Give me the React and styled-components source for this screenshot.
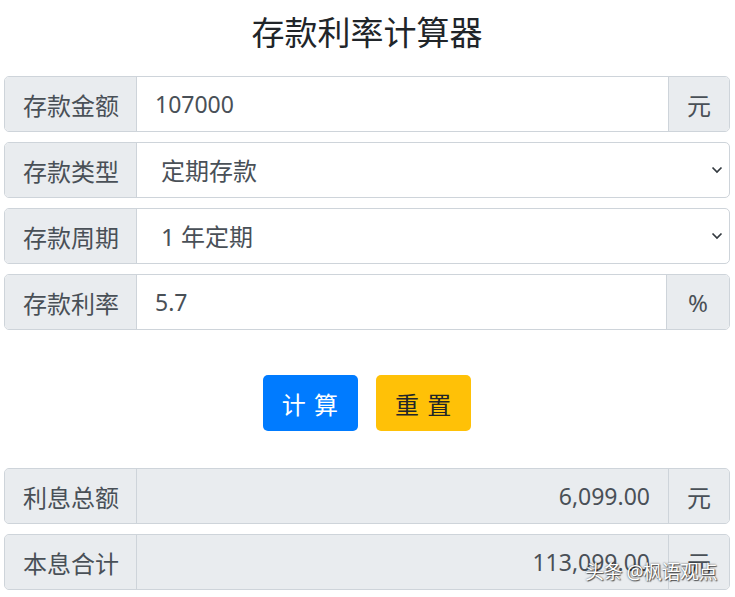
import { useState } from 'react';
import styled, { createGlobalStyle } from 'styled-components';

const GlobalStyle = createGlobalStyle`
  body {
    margin: 0;
    background: #fff;
    font-family: "Noto Sans", "Noto Sans CJK SC", sans-serif;
    color: #495057;
  }
`;

const Page = styled.div`
  position: relative;
  width: 735px;
  height: 597px;
  overflow: hidden;
  padding: 0 5px 0 4px;
  box-sizing: border-box;
`;

const Title = styled.h1`
  margin: 13px 0 0;
  height: 63px;
  text-align: center;
  font-size: 33px;
  font-weight: 400;
  line-height: 40px;
  color: #212529;
`;

const Form = styled.div`
  display: flex;
  flex-direction: column;
  gap: 10px;
`;

const Group = styled.div`
  display: flex;
  height: 56px;
  border: 1px solid #ced4da;
  border-radius: 5px;
  overflow: hidden;
  box-sizing: border-box;
  background: ${(p) => (p.$readonly ? '#e9ecef' : '#fff')};
`;

const Label = styled.div`
  flex: 0 0 auto;
  width: 132px;
  display: flex;
  align-items: center;
  padding-left: 18px;
  box-sizing: border-box;
  background: #e9ecef;
  border-right: 1px solid #ced4da;
  font-size: 24px;
  color: #495057;
`;

const Addon = styled.div`
  flex: 0 0 auto;
  width: ${(p) => p.$w || 60}px;
  display: flex;
  align-items: center;
  justify-content: center;
  background: #e9ecef;
  border-left: 1px solid #ced4da;
  font-size: 24px;
  color: #495057;
`;

const Input = styled.input`
  flex: 1;
  min-width: 0;
  border: none;
  outline: none;
  background: transparent;
  padding: 0 18px;
  font-family: inherit;
  font-size: 23px;
  color: #495057;
  text-align: ${(p) => (p.$right ? 'right' : 'left')};
`;

const SelectWrap = styled.div`
  position: relative;
  flex: 1;
  display: flex;
`;

const Select = styled.select`
  flex: 1;
  appearance: none;
  border: none;
  outline: none;
  background: transparent;
  padding: 0 40px 0 24px;
  font-family: inherit;
  font-size: 24px;
  color: #495057;
`;

const Chevron = styled.svg`
  position: absolute;
  right: 5px;
  top: 50%;
  margin-top: -6px;
  pointer-events: none;
`;

const Buttons = styled.div`
  display: flex;
  justify-content: center;
  gap: 18px;
  margin: 45px 0 37px;
`;

const Button = styled.button`
  height: 56px;
  padding: 0 19px;
  border: none;
  border-radius: 5px;
  font-family: inherit;
  font-size: 24px;
  letter-spacing: 1px;
  background: ${(p) => (p.$variant === 'warning' ? '#ffc107' : '#007bff')};
  color: ${(p) => (p.$variant === 'warning' ? '#212529' : '#fff')};
  cursor: pointer;
`;

const Watermark = styled.div`
  position: absolute;
  left: 585px;
  top: 557px;
  font-size: 19px;
  letter-spacing: -0.5px;
  color: #fff;
  text-shadow: 0 0 2px rgba(0, 0, 0, 0.7), 1px 1px 1px rgba(0, 0, 0, 0.6);
  white-space: nowrap;
`;

function SelectRow({ label, value, options }) {
  const [v, setV] = useState(value);
  return (
    <Group>
      <Label>{label}</Label>
      <SelectWrap>
        <Select value={v} onChange={(e) => setV(e.target.value)}>
          {options.map((o) => (
            <option key={o}>{o}</option>
          ))}
        </Select>
        <Chevron width="14" height="12" viewBox="0 0 14 12">
          <path d="M2.5 3.5 L7 8 L11.5 3.5" fill="none" stroke="#343a40" strokeWidth="1.7" />
        </Chevron>
      </SelectWrap>
    </Group>
  );
}

export default function App() {
  const [amount, setAmount] = useState('107000');
  const [rate, setRate] = useState('5.7');

  return (
    <Page>
      <GlobalStyle />
      <Title>存款利率计算器</Title>
      <Form>
        <Group>
          <Label>存款金额</Label>
          <Input value={amount} onChange={(e) => setAmount(e.target.value)} />
          <Addon $w={60}>元</Addon>
        </Group>
        <SelectRow label="存款类型" value="定期存款" options={['活期存款', '定期存款']} />
        <SelectRow label="存款周期" value="1 年定期" options={['3 个月定期', '6 个月定期', '1 年定期', '2 年定期', '3 年定期', '5 年定期']} />
        <Group>
          <Label>存款利率</Label>
          <Input value={rate} onChange={(e) => setRate(e.target.value)} />
          <Addon $w={62}>%</Addon>
        </Group>
      </Form>
      <Buttons>
        <Button>计 算</Button>
        <Button $variant="warning">重 置</Button>
      </Buttons>
      <Form>
        <Group $readonly>
          <Label>利息总额</Label>
          <Input $right readOnly value="6,099.00" />
          <Addon $w={60}>元</Addon>
        </Group>
        <Group $readonly>
          <Label>本息合计</Label>
          <Input $right readOnly value="113,099.00" />
          <Addon $w={60}>元</Addon>
        </Group>
      </Form>
      <Watermark>头条 @枫语观点</Watermark>
    </Page>
  );
}
